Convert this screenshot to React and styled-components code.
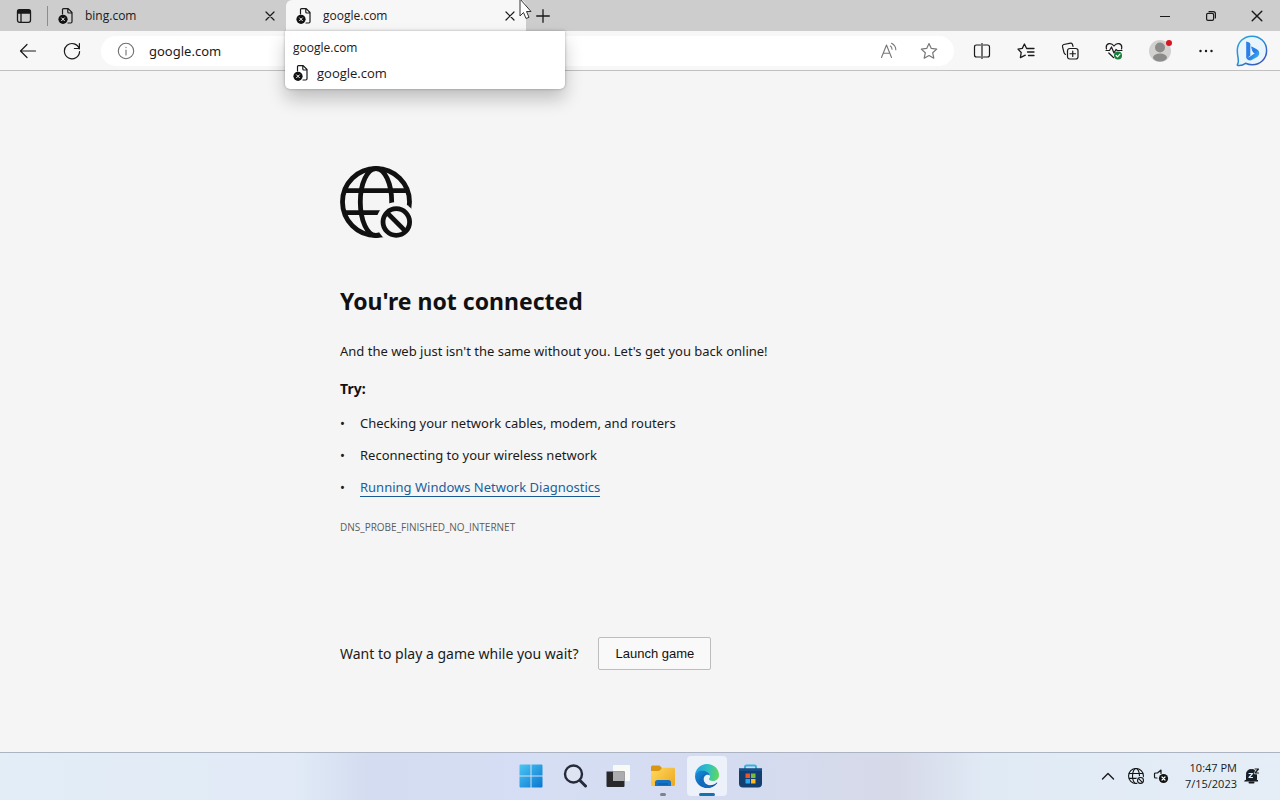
import React, { useId } from "react";
import styled, { createGlobalStyle } from "styled-components";

const uiFont = `"Segoe UI", "Open Sans", "Noto Sans", sans-serif`;
const pageFont = `"Segoe UI", "Noto Sans", "Open Sans", sans-serif`;

const GlobalStyle = createGlobalStyle`
  *, *::before, *::after { box-sizing: border-box; }
  body {
    margin: 0;
    font-family: ${uiFont};
    font-size: 13px;
    color: #1a1a1a;
    background: #f5f5f5;
  }
  button, input { font: inherit; color: inherit; }
  svg { display: block; flex: none; }
`;

const Screen = styled.div`
  display: flex;
  flex-direction: column;
  min-height: 100vh;
`;

/* ---------- tab strip ---------- */

const TabStrip = styled.header`
  display: flex;
  align-items: stretch;
  height: 31px;
  background: #cdcdcd;
`;

const IconButton = styled.button`
  display: flex;
  align-items: center;
  justify-content: center;
  flex: none;
  width: ${(p) => p.$width || 44}px;
  padding: 0;
  border: 0;
  background: transparent;
  color: ${(p) => p.$color || "#1a1a1a"};
`;

const StripDivider = styled.span`
  align-self: center;
  width: 1px;
  height: 20px;
  background: #8c8c8c;
`;

const Tab = styled.div`
  position: relative;
  display: flex;
  align-items: center;
  width: ${(p) => (p.$active ? 240 : 238)}px;
  padding: 0 4px 0 10px;
  border-radius: 6px 6px 0 0;
  background: ${(p) => (p.$active ? "#f7f7f7" : "transparent")};
`;

const TabLabel = styled.button`
  display: flex;
  flex: 1;
  align-items: center;
  gap: 11px;
  padding: 0;
  border: 0;
  background: transparent;
  font-size: 12px;
`;

const StripSpace = styled.div`
  flex: 1;
`;

const HoverCard = styled.div`
  position: absolute;
  z-index: 2;
  top: 31px;
  left: -1px;
  width: 280px;
  padding: 8px 8px 6px;
  border-radius: 0 0 5px 5px;
  background: #fff;
  box-shadow: 0 10px 18px rgba(0, 0, 0, 0.22), 0 0 3px rgba(0, 0, 0, 0.3);
`;

const CardTitle = styled.div`
  font-size: 12px;
  line-height: 18px;
`;

const CardSite = styled.div`
  display: flex;
  align-items: center;
  gap: 8px;
  padding-top: 6px;
  font-size: 13px;
  line-height: 20px;
`;

const Pointer = styled.svg`
  position: absolute;
  z-index: 3;
  top: 0;
  right: -6px;
`;

/* ---------- toolbar ---------- */

const Toolbar = styled.div`
  display: flex;
  align-items: stretch;
  height: 40px;
  padding: 0 4px 0 6px;
  border-bottom: 1px solid #c0c0c0;
  background: #f7f7f7;
`;

const AddressBar = styled.form`
  display: flex;
  flex: 1;
  align-items: stretch;
  align-self: center;
  height: 30px;
  margin: 0 6px 0 7px;
  padding: 0 5px;
  border-radius: 15px;
  background: #fff;
`;

const AddressInput = styled.input`
  flex: 1;
  min-width: 0;
  padding: 0 3px;
  border: 0;
  outline: 0;
  background: transparent;
  font-family: ${pageFont};
  font-size: 13px;
`;

/* ---------- error page ---------- */

const Page = styled.main`
  flex: 1;
  width: 100%;
  max-width: 600px;
  margin: 0 auto;
  padding-top: 95px;
  font-family: ${pageFont};
`;

const Title = styled.h1`
  margin: 43px 0 0;
  font-size: 23px;
  font-weight: 700;
  line-height: 40px;
  color: #111;
`;

const Lead = styled.p`
  margin: 20px 0 0;
  line-height: 20px;
`;

const Subtitle = styled.h2`
  margin: 18px 0 0;
  font-size: 14px;
  font-weight: 700;
  line-height: 20px;
  color: #111;
`;

const TipList = styled.ul`
  margin: 8px 0 0;
  padding: 0;
  list-style: none;
`;

const Tip = styled.li`
  display: flex;
  line-height: 32px;

  &::before {
    content: "•";
    width: 20px;
  }
`;

const TipLink = styled.a`
  align-self: center;
  border-bottom: 1px solid #1a5a92;
  color: #1a5f9e;
  line-height: 18px;
  text-decoration: none;
`;

const ErrorCode = styled.p`
  margin: 16px 0 0;
  font-family: ${uiFont};
  font-size: 10px;
  line-height: 16px;
  color: #5c5c5c;
`;

const GameRow = styled.div`
  display: flex;
  align-items: center;
  gap: 20px;
  margin-top: 102px;
  font-size: 14px;
`;

const GameButton = styled.button`
  height: 33px;
  padding: 0 16px;
  border: 1px solid #bdbdbd;
  border-radius: 2px;
  background: #f9f9f9;
  font-family: "Liberation Sans", sans-serif;
  font-size: 13px;
  color: #111;
`;

/* ---------- taskbar ---------- */

const Taskbar = styled.footer`
  display: grid;
  grid-template-columns: 1fr auto 1fr;
  height: 48px;
  border-top: 1px solid #acb4c4;
  background: linear-gradient(
    90deg,
    #e3edf6 0%,
    #e1eaf6 23%,
    #d3dcf0 29%,
    #d5def4 42%,
    #d5dcf1 56%,
    #d6d9e8 70%,
    #e0eaf5 77%,
    #e5eef7 100%
  );
`;

const TaskGroup = styled.nav`
  display: flex;
  grid-column: 2;
  padding-left: 2px;
`;

const TaskButton = styled.button`
  position: relative;
  display: flex;
  align-items: center;
  justify-content: center;
  width: 40px;
  height: 40px;
  margin: 3px 2px 0;
  padding: 0;
  border: 0;
  border-radius: 4px;
  background: ${(p) => (p.$active ? "#edf1fa" : "transparent")};

  &::after {
    content: "";
    display: ${(p) => (p.$running || p.$active ? "block" : "none")};
    position: absolute;
    bottom: 0;
    width: ${(p) => (p.$active ? 16 : 6)}px;
    height: 3px;
    border-radius: 2px;
    background: ${(p) => (p.$active ? "#1473ae" : "#7d828f")};
  }
`;

const Tray = styled.div`
  display: flex;
  align-items: center;
  justify-content: flex-end;
  padding: 0 16px 2px 0;
`;

const Clock = styled.time`
  margin: 0 3px 0 12px;
  font-size: 11px;
  line-height: 16px;
  text-align: right;
`;

/* ---------- drawings ---------- */

const Line = ({ size = 18, box = size, width = 1, children, ...rest }) => (
  <svg
    width={size}
    height={size}
    viewBox={`0 0 ${box} ${box}`}
    fill="none"
    stroke="currentColor"
    strokeWidth={width}
    strokeLinecap="round"
    strokeLinejoin="round"
    aria-hidden="true"
    {...rest}
  >
    {children}
  </svg>
);

const MissingPage = () => (
  <Line size={16} width={1.2}>
    <path d="M4.500 6V1.700Q4.500.7 5.500.7H10.200L14 4.500V13.800Q14 15 12.800 15H10M9.800 1V4Q9.800 5 10.800 5H13.800" />
    <circle cx="5" cy="11.300" r="4.600" fill="#111" stroke="none" />
    <path d="M3.600 9.900l2.800 2.800M6.400 9.900l-2.800 2.800" stroke="#fff" strokeWidth="1" />
  </Line>
);

const Cross = ({ size = 10 }) => (
  <Line size={size} box={10} width={1.2}>
    <path d="M1 1l8 8M9 1l-8 8" />
  </Line>
);

function Globe({ size }) {
  const id = useId();
  return (
    <svg width={size} height={size} viewBox="0 0 72 72" fill="none" stroke="#111" strokeWidth="4.800" aria-hidden="true">
      <mask id={id} maskUnits="userSpaceOnUse" x="0" y="0" width="72" height="72">
        <rect width="72" height="72" fill="#fff" stroke="none" />
        <circle cx="56.300" cy="56" r="20" fill="#000" stroke="none" />
      </mask>
      <g mask={`url(#${id})`}>
        <circle cx="36" cy="36" r="33.500" />
        <ellipse cx="36" cy="36" rx="15.700" ry="33.500" />
        <path d="M4 24.700H68M4 46.700H68" />
      </g>
      <circle cx="56.300" cy="56" r="13.300" />
      <path d="M46.700 46.400L65.900 65.600" />
    </svg>
  );
}

const BingLogo = () => (
  <svg width="32" height="32" viewBox="0 0 32 32" fill="none" aria-hidden="true">
    <defs>
      <linearGradient id="bubble" x1="5" y1="3" x2="26" y2="29" gradientUnits="userSpaceOnUse">
        <stop stopColor="#2b9fe0" />
        <stop offset=".5" stopColor="#278bd4" />
        <stop offset="1" stopColor="#3d4fb4" />
      </linearGradient>
      <linearGradient id="bee" x1="11" y1="12" x2="23" y2="22" gradientUnits="userSpaceOnUse">
        <stop stopColor="#3b9cf2" />
        <stop offset=".5" stopColor="#2a78e4" />
        <stop offset="1" stopColor="#35b6ec" />
      </linearGradient>
    </defs>
    <path d="M16 1.200C24.300 1.200 30.600 7.300 30.600 15.500C30.600 23.800 24.300 29.800 16.200 29.800C13.500 29.800 11.500 29.200 9.500 28.300C7 30.300 4.500 30.900 1.800 30.500C1.200 30.400 1.100 29.900 1.400 29.500C2.800 27.500 2.500 25.300 2 22.500C1.500 20 1.300 18 1.300 15.800C1.300 7.300 7.600 1.200 16 1.200Z" fill="#e9f5fd" stroke="url(#bubble)" strokeWidth="1.500" />
    <path d="M10.500 6.500L13.200 7.500Q14.300 8 14.300 9.300V20.500L10.800 23.500Q10.200 22.700 10.200 21.500V7Q10.200 6.500 10.500 6.500Z" fill="#2b7fe8" />
    <path d="M15.800 11.600L21.200 14.600Q23.300 15.900 23.300 18.300Q23.300 20.300 21.600 21.700L16.200 24.800Q13.700 26.100 11.500 24.500Q10.600 23.700 10.300 22.300Q12.300 23 14.200 21.500L18.800 18.300Q17 17.700 16.300 15.900L15.200 12.500Q14.900 11.200 15.800 11.600Z" fill="url(#bee)" />
  </svg>
);

const Profile = () => (
  <svg width="26" height="26" viewBox="0 0 26 26" aria-hidden="true">
    <circle cx="13" cy="13" r="11" fill="#d3d1cf" />
    <circle cx="13" cy="9.500" r="5" fill="#8d8b89" />
    <ellipse cx="13" cy="19.500" rx="7" ry="4" fill="#8d8b89" />
    <circle cx="22" cy="5" r="3" fill="#d81420" />
  </svg>
);

const WindowsLogo = () => (
  <svg width="24" height="24" viewBox="0 0 24 24" aria-hidden="true">
    <linearGradient id="win" x1="0" y1="0" x2="24" y2="24" gradientUnits="userSpaceOnUse">
      <stop stopColor="#4cc8f4" />
      <stop offset="1" stopColor="#0874cf" />
    </linearGradient>
    <path d="M1.500.5H11.500V11.500H.5V1.500Q.5.500 1.500.500ZM12.500.5H22.500Q23.500.5 23.500 1.500V11.500H12.500ZM.5 12.500H11.500V23.500H1.500Q.5 23.500.5 22.500ZM12.500 12.500H23.500V22.500Q23.500 23.500 22.500 23.500H12.500Z" fill="url(#win)" />
  </svg>
);

const TaskView = () => (
  <svg width="26" height="24" viewBox="0 0 26 24" aria-hidden="true">
    <rect x="7" y="1" width="17" height="16" rx="1" fill="#f8faf8" />
    <path d="M.5 7.500H18.500V22Q18.500 23 17.500 23H1.500Q.5 23 .5 22Z" fill="#28282a" />
    <path d="M7 7.500H18.500V17H7Z" fill="#acacae" />
  </svg>
);

const FolderIcon = () => (
  <svg width="26" height="24" viewBox="0 0 26 24" aria-hidden="true">
    <linearGradient id="folder" x1="3" y1="4" x2="22" y2="22" gradientUnits="userSpaceOnUse">
      <stop stopColor="#ffd75b" />
      <stop offset="1" stopColor="#edab25" />
    </linearGradient>
    <path d="M1 3Q1 1.500 2.500 1.500H9.500L12.500 4.500V9H1Z" fill="#d99612" />
    <path d="M1 7H8.500Q9.500 7 10.300 6L11.500 4.500Q12 3.800 13 3.800H23.500Q25 3.800 25 5.300V20.500Q25 22 23.500 22H2.500Q1 22 1 20.500Z" fill="url(#folder)" />
    <path d="M5 22V18.500Q5 16 7.500 16H18.500Q21 16 21 18.500V22Z" fill="#1672c2" />
    <path d="M8 20H18" stroke="#0b559a" />
  </svg>
);

const EdgeLogo = () => (
  <svg width="26" height="26" viewBox="0 0 26 26" aria-hidden="true">
    <defs>
      <linearGradient id="edgeTop" x1="2" y1="8" x2="25" y2="12" gradientUnits="userSpaceOnUse">
        <stop stopColor="#23a4df" />
        <stop offset=".5" stopColor="#30c1c2" />
        <stop offset="1" stopColor="#63d957" />
      </linearGradient>
      <linearGradient id="edgeLow" x1="2" y1="10" x2="16" y2="25" gradientUnits="userSpaceOnUse">
        <stop stopColor="#1689d8" />
        <stop offset="1" stopColor="#0b4f9f" />
      </linearGradient>
    </defs>
    <path d="M1 13C1 6 6.500 1 13 1C20 1 25 6 25 12C25 15.500 22.500 18 19 18C16.500 18 15 17 15 16C15 15.300 16 14.800 16 13.200C16 10.500 13 8.300 9.500 8.300C5.500 8.300 1 10.300 1 13Z" fill="url(#edgeTop)" />
    <path d="M1 13C1.300 9.500 4.800 7.500 8.500 7.700C12 7.800 15.300 9.500 16 12.500C13.500 10.500 9.500 12.500 9.700 16.500C9.900 20 13 22.500 16.500 22.300C19 22.200 21 21.200 22.500 19.700C23 19.300 23.500 19.800 23.100 20.300C21 23.300 17 25 13 25C6.300 25 1 19.800 1 13Z" fill="url(#edgeLow)" />
    <path d="M11.500 11.600C9.300 13 8.800 15 9.100 17C9.800 21.300 14.500 24 19.500 23C17.500 24.500 15 25 13 25C9 24.500 6 21.800 6 17.800C6 14.500 8.500 12 11.500 11.600Z" fill="#126bbd" />
  </svg>
);

const StoreIcon = () => (
  <svg width="26" height="26" viewBox="0 0 26 26" aria-hidden="true">
    <path d="M7 6V4Q7 2.500 8.500 2.500H16.500Q18 2.500 18 4V6" fill="none" stroke="#35b2df" strokeWidth="2" />
    <path d="M1 5.500H24V20.500Q24 24.500 20 24.500H5Q1 24.500 1 20.500Z" fill="#133e70" />
    <path d="M1 5.500H24V8H1Z" fill="#16518b" />
    <path d="M7.500 10.500H12V15H7.500Z" fill="#ee5428" />
    <path d="M13 10.500H17.500V15H13Z" fill="#7cba3c" />
    <path d="M7.500 16H12V20.500H7.500Z" fill="#28a8ea" />
    <path d="M13 16H17.500V20.500H13Z" fill="#fdbb20" />
  </svg>
);

const starPath = "M9 1.500L11.300 6.400L16.700 7.100L12.700 10.800L13.800 16.200L9 13.500L4.200 16.200L5.300 10.800L1.300 7.100L6.700 6.400Z";

export default function App() {
  return (
    <Screen>
      <GlobalStyle />
      <TabStrip>
        <IconButton $width={47} aria-label="Tab actions">
          <Line size={16} width={1.3}>
            <rect x="1.500" y="1.700" width="13" height="12.600" rx="2" />
            <path d="M2 2.500H14V5H2Z" fill="currentColor" />
            <path d="M5 5V14" />
          </Line>
        </IconButton>
        <StripDivider />
        <Tab>
          <TabLabel><MissingPage />bing.com</TabLabel>
          <IconButton $width={24} aria-label="Close bing.com"><Cross /></IconButton>
        </Tab>
        <Tab $active>
          <TabLabel><MissingPage />google.com</TabLabel>
          <IconButton $width={24} aria-label="Close google.com"><Cross /></IconButton>
          <HoverCard role="tooltip">
            <CardTitle>google.com</CardTitle>
            <CardSite><MissingPage />google.com</CardSite>
          </HoverCard>
          <Pointer width="13" height="20" viewBox="0 0 13 20" aria-hidden="true">
            <path d="M1 -1V16L4.500 12.500L7 18.500L10 17.300L7.500 11.500H12Z" fill="#fff" stroke="#333" strokeWidth="1" />
          </Pointer>
        </Tab>
        <IconButton $width={34} aria-label="New tab">
          <Line size={14} width={1.3}><path d="M7 .7V13.300M.7 7H13.300" /></Line>
        </IconButton>
        <StripSpace />
        <IconButton $width={46} aria-label="Minimize">
          <Line size={10} width={1.2}><path d="M.5 5.500H9.500" /></Line>
        </IconButton>
        <IconButton $width={46} aria-label="Restore">
          <Line size={10} width={1.2}>
            <rect x=".6" y="2.400" width="7" height="7" rx="1.400" />
            <path d="M3 .6H7.200Q9.400.6 9.400 2.800V7" />
          </Line>
        </IconButton>
        <IconButton $width={46} aria-label="Close window"><Cross size={12} /></IconButton>
      </TabStrip>

      <Toolbar>
        <IconButton aria-label="Back">
          <Line width={1.2}><path d="M16.500 9H1.500M8 2.500L1.500 9L8 15.500" /></Line>
        </IconButton>
        <IconButton aria-label="Refresh">
          <Line width={1.2}><path d="M16.300 7A7.600 7.600 0 1 0 16.600 9.500M16.400 1.500V6.500H11.400" /></Line>
        </IconButton>
        <AddressBar>
          <IconButton type="button" $width={40} $color="#707070" aria-label="Site information">
            <Line size={18} width={1.1}>
              <circle cx="9" cy="9" r="7.700" />
              <path d="M9 8V13M9 5.300V5.600" />
            </Line>
          </IconButton>
          <AddressInput aria-label="Address" defaultValue="google.com" />
          <IconButton type="button" $width={40} $color="#777" aria-label="Read aloud">
            <Line size={18} width={1.1}>
              <path d="M1.500 15.500L6.500 3L11.500 15.500M3.300 11.200H9.700M10.300 4Q12 5 12 7.200M11.500 1.300Q15.800 3.500 15.800 7.700" />
            </Line>
          </IconButton>
          <IconButton type="button" $width={40} $color="#777" aria-label="Add to favorites">
            <Line size={18} width={1.2}><path d={starPath} /></Line>
          </IconButton>
        </AddressBar>
        <IconButton aria-label="Split screen">
          <Line size={18} width={1.2}>
            <path d="M7.500 3H3.500Q1.500 3 1.500 5V13Q1.500 15 3.500 15H7.500M10.500 3H14.500Q16.500 3 16.500 5V13Q16.500 15 14.500 15H10.500" />
            <path d="M9 1.500V16.500" />
          </Line>
        </IconButton>
        <IconButton aria-label="Favorites">
          <Line size={18} width={1.3}>
            <path d="M11.500 6.500H9.600L7.400 2L5.300 6.400L1 7.100L4.200 10.500L3.400 15.700L8.300 13.200M11 6.500H17M10.500 10H17M11.500 13.500H17" />
          </Line>
        </IconButton>
        <IconButton aria-label="Collections">
          <Line size={18} width={1.2}>
            <rect x="6.500" y="6.500" width="10.500" height="10.500" rx="2.200" />
            <path d="M11.750 9V14.500M9 11.750H14.500M4.500 12.500Q3.300 12 3 10.700L1.500 4.700Q1.200 3 2.800 2.500L9.500 1.200Q11 .9 11.500 2.500L12 4.300" />
          </Line>
        </IconButton>
        <IconButton aria-label="Browser essentials">
          <Line size={18} width={1.2}>
            <path d="M1.500 7Q.4 2.700 4 1.700Q6.800 1 9 4Q11.200 1 14 1.700Q17.600 2.700 16.500 7M1 8.500H4.500L6.500 5L9 11L11 7.500L12.200 8.500H17M3.800 11L8.500 15.500" />
            <circle cx="13" cy="13.500" r="4" fill="#15803a" stroke="none" />
            <path d="M11.200 13.500L12.500 14.800L15 12.200" stroke="#fff" />
          </Line>
        </IconButton>
        <IconButton $width={48} aria-label="Profile"><Profile /></IconButton>
        <IconButton aria-label="Settings and more">
          <Line size={16} width={2.4}><path d="M2.500 8h.01M8 8h.01M13.500 8h.01" /></Line>
        </IconButton>
        <IconButton $width={48} aria-label="Bing chat"><BingLogo /></IconButton>
      </Toolbar>

      <Page>
        <Globe size={72} />
        <Title>You're not connected</Title>
        <Lead>And the web just isn't the same without you. Let's get you back online!</Lead>
        <Subtitle>Try:</Subtitle>
        <TipList>
          <Tip>Checking your network cables, modem, and routers</Tip>
          <Tip>Reconnecting to your wireless network</Tip>
          <Tip><TipLink href="#diagnostics">Running Windows Network Diagnostics</TipLink></Tip>
        </TipList>
        <ErrorCode>DNS_PROBE_FINISHED_NO_INTERNET</ErrorCode>
        <GameRow>
          <span>Want to play a game while you wait?</span>
          <GameButton>Launch game</GameButton>
        </GameRow>
      </Page>

      <Taskbar>
        <TaskGroup aria-label="Apps">
          <TaskButton aria-label="Start"><WindowsLogo /></TaskButton>
          <TaskButton aria-label="Search">
            <Line size={24} width={2.4} color="#252b3a">
              <circle cx="10.500" cy="10" r="8.500" fill="#dfe4f2" />
              <path d="M17 16.500L22.500 22" strokeWidth="3" />
            </Line>
          </TaskButton>
          <TaskButton aria-label="Task view"><TaskView /></TaskButton>
          <TaskButton $running aria-label="File Explorer"><FolderIcon /></TaskButton>
          <TaskButton $active aria-label="Edge"><EdgeLogo /></TaskButton>
          <TaskButton aria-label="Store"><StoreIcon /></TaskButton>
        </TaskGroup>
        <Tray>
          <IconButton $width={30} aria-label="Show hidden icons">
            <Line size={14} width={1.4}><path d="M1.500 10L7 4.500L12.500 10" /></Line>
          </IconButton>
          <IconButton $width={26} aria-label="Network"><Globe size={16} /></IconButton>
          <IconButton $width={24} aria-label="Volume">
            <Line size={16} width={1.2}>
              <path d="M8 5.500V2L4.500 5H2.500Q1.500 5 1.500 6V9Q1.500 10 2.500 10H4" />
              <circle cx="10.500" cy="10.500" r="4.600" fill="#111" stroke="none" />
              <path d="M9 9l3 3M12 9l-3 3" stroke="#fff" />
            </Line>
          </IconButton>
          <Clock dateTime="2023-07-15T22:47">10:47 PM<br />7/15/2023</Clock>
          <IconButton $width={24} aria-label="Notifications">
            <Line size={16} width={1}>
              <path d="M2.500 11.500V6.500Q2.500 1.500 7.500 1.500Q12.500 1.500 12.500 6.500V11.500L14 13H1Z" fill="#14202c" />
              <path d="M5.500 14.500H9.500" strokeWidth="2" />
              <path d="M5 5.500H8.500L5 9.500H8.500" stroke="#e5eef7" strokeWidth="1.200" />
              <path d="M11 1H14.500L11 5H14.500" stroke="#e5eef7" strokeWidth="2.400" />
              <path d="M11 1H14.500L11 5H14.500" strokeWidth="1.200" />
            </Line>
          </IconButton>
        </Tray>
      </Taskbar>
    </Screen>
  );
}
